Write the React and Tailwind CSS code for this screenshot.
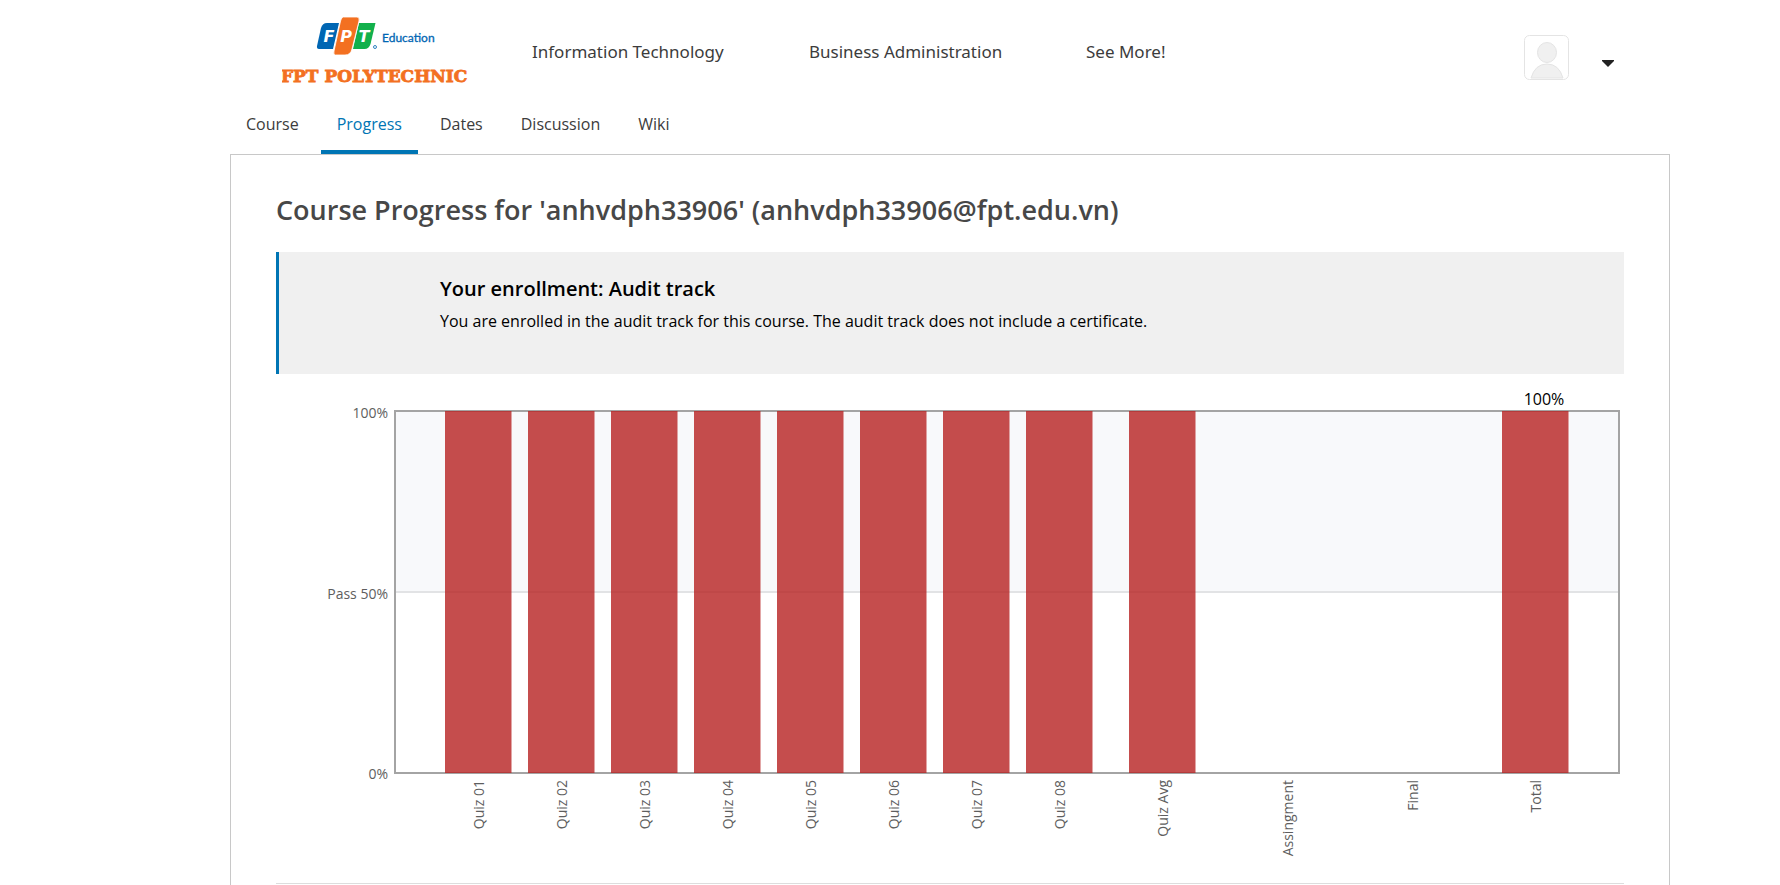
const bars = [
  { label: "Quiz 01", x: 169, value: 100 },
  { label: "Quiz 02", x: 252, value: 100 },
  { label: "Quiz 03", x: 335, value: 100 },
  { label: "Quiz 04", x: 418, value: 100 },
  { label: "Quiz 05", x: 501, value: 100 },
  { label: "Quiz 06", x: 584, value: 100 },
  { label: "Quiz 07", x: 667, value: 100 },
  { label: "Quiz 08", x: 750, value: 100 },
  { label: "Quiz Avg", x: 853, value: 100 },
  { label: "Assingment", x: 978, value: 0 },
  { label: "Final", x: 1103, value: 0 },
  { label: "Total", x: 1226, value: 100 },
];

const tabs = ["Course", "Progress", "Dates", "Discussion", "Wiki"];
const programs = ["Information Technology", "Business Administration", "See More!"];

function Logo() {
  return (
    <svg width="196" height="78" viewBox="0 0 196 78" role="img" aria-label="FPT Education, FPT Polytechnic">
      <path d="M45 8h12l-6 26H37q-2.500 0-2-3l4-18q1.500-5 6-5z" fill="#0066b3" />
      <path d="M77 8h16.500l-5 21q-1.500 5-6 5H71z" fill="#12b04b" />
      <path d="M61.500 2H75q3 0 2 4l-7 28q-1.500 6-7 6H53.500q-2.500 0-1.500-4L58.500 6q1-4 3-4z" fill="#f37021" stroke="#fff" strokeWidth="0.8" />
      <g fill="#fff" fontFamily="DejaVu Sans, sans-serif" fontStyle="italic" fontWeight="700" fontSize="16" textAnchor="middle">
        <text x="47" y="27">F</text>
        <text x="64" y="27">P</text>
        <text x="82" y="27">T</text>
      </g>
      <circle cx="93" cy="32" r="1.500" fill="#fff" stroke="#0066b3" strokeWidth="0.8" />
      <text x="100" y="27" fill="#0066b3" fontFamily="Lato, sans-serif" fontSize="12" fontWeight="400" stroke="#0066b3" strokeWidth="0.3">Education</text>
      <text x="-1" y="67" fill="#f37021" stroke="#f37021" strokeWidth="0.8" fontFamily="DejaVu Serif, serif" fontWeight="700" fontSize="17">FPT POLYTECHNIC</text>
    </svg>
  );
}

function Chart() {
  return (
    <svg className="block h-auto w-full" viewBox="0 -13 1348 495" role="img" aria-label="Course grade chart" fontFamily="Open Sans, sans-serif" fontSize="14" fill="#5e5e5e">
      <rect x="119" y="10" width="1224" height="181" fill="#f8f9fb" />
      <path d="M119 191h1224" stroke="#e2e3e5" strokeWidth="2" />
      <rect x="119" y="10" width="1224" height="362" fill="none" stroke="#a4a4a4" strokeWidth="2" />
      {bars.filter((b) => b.value > 0).map((b) => (
        <rect key={b.label} x={b.x} y="10" width="66.500" height="362" fill="#b72121" fillOpacity="0.8" />
      ))}
      <text x="112" y="17" textAnchor="end">100%</text>
      <text x="112" y="198" textAnchor="end">Pass 50%</text>
      <text x="112" y="378" textAnchor="end">0%</text>
      {bars.map((b) => (
        <text key={b.label} textAnchor="end" transform={`translate(${b.x + 39} 379) rotate(-90)`}>{b.label}</text>
      ))}
      <text x="1268" y="4" textAnchor="middle" fontSize="16" fill="#000">100%</text>
    </svg>
  );
}

export default function App() {
  return (
    <div className="min-h-screen overflow-hidden bg-white pr-[110px] pl-[230px] font-['Open_Sans',sans-serif]">
      <header className="flex h-[94px] items-start pl-[52px]">
        <a href="#home" className="mt-[15px] w-[196px] shrink-0"><Logo /></a>
        <nav className="mt-10 ml-[54px] grid grid-cols-[277px_277px_auto] font-['Noto_Sans',sans-serif] text-[17px] leading-6 text-[#3c3c3c]">
          {programs.map((p) => <a key={p} href="#programs">{p}</a>)}
        </nav>
        <div className="mt-[35px] mr-14 ml-auto flex items-center gap-[33px]">
          <svg width="45" height="45" viewBox="0 0 45 45" role="img" aria-label="Profile">
            <rect x=".5" y=".5" width="44" height="44" rx="5" fill="#fff" stroke="#e4e4e4" />
            <path d="M7 43q4-14 16-14t16 14z" fill="#f0f0f0" stroke="#e4e4e4" />
            <ellipse cx="23" cy="17.500" rx="9.500" ry="10" fill="#f0f0f0" stroke="#e4e4e4" />
          </svg>
          <button type="button" aria-label="Open account menu" className="mt-3">
            <svg width="12" height="7" viewBox="0 0 12 7"><path d="M0 0h12v1L6 7 0 1z" fill="#222" /></svg>
          </button>
        </div>
      </header>
      <nav className="flex h-[60px] gap-1.5 text-base leading-6 text-[#3c3c3c]">
        {tabs.map((t) => (
          <a key={t} href="#tab" className={t === "Progress" ? "border-b-4 border-[#0075b4] px-4 pt-[18px] text-[#0075b4]" : "px-4 pt-[18px]"}>{t}</a>
        ))}
      </nav>
      <main className="border border-[#c8c8c8] px-[45px] pt-[35px] pb-10">
        <h1 className="text-[27px] leading-10 font-semibold text-[#474747]">Course Progress for 'anhvdph33906' (anhvdph33906@fpt.edu.vn)</h1>
        <section className="mt-[22px] h-[122px] border-l-3 border-[#0075b4] bg-[#f0f0f0] pt-[23px] pl-[161px] text-black">
          <h2 className="text-xl leading-7 font-semibold">Your enrollment: Audit track</h2>
          <p className="mt-1.5 text-base leading-6">You are enrolled in the audit track for this course. The audit track does not include a certificate.</p>
        </section>
        <section className="mt-[14px] border-b border-[#dddddd]">
          <Chart />
        </section>
      </main>
    </div>
  );
}
